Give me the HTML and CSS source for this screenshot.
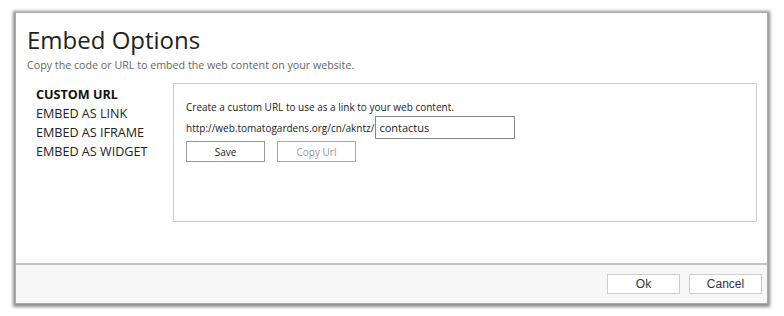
FILE: index.html
```html
<!DOCTYPE html>
<html>
<head>
  <meta charset="UTF-8">
  <title>Embed Options</title>
  <link rel="stylesheet" href="styles.css">
</head>
<body>
  <div class="dialog">
    <div class="dialog-body">
      <h1>Embed Options</h1>
      <p class="subtitle">Copy the code or URL to embed the web content on your website.</p>

      <div class="main">
        <ul class="nav">
          <li class="active">CUSTOM URL</li>
          <li>EMBED AS LINK</li>
          <li>EMBED AS IFRAME</li>
          <li>EMBED AS WIDGET</li>
        </ul>

        <div class="panel">
          <p class="hint">Create a custom URL to use as a link to your web content.</p>
          <div class="url-row">
            <span class="url-base">http://web.tomatogardens.org/cn/akntz/</span>
            <input type="text" class="url-input" value="contactus">
          </div>
          <div class="panel-buttons">
            <button class="btn">Save</button>
            <button class="btn" disabled>Copy Url</button>
          </div>
        </div>
      </div>
    </div>

    <div class="dialog-footer">
      <button class="footer-btn">Ok</button>
      <button class="footer-btn">Cancel</button>
    </div>
  </div>
</body>
</html>
```

FILE: styles.css
```css
body {
  margin: 0;
  padding: 13px 17px 13px 16px;
  background: white;
  font-family: "Open Sans", "Noto Sans", sans-serif;
  color: #222;
}
.dialog {
  width: 751px;
  height: 290px;
  background: white;
  display: flex;
  flex-direction: column;
  box-shadow: 0 0 0 1px #aaa, 0 1px 3px 3px rgba(0,0,0,0.45);
}
.dialog-body {
  flex: 1;
  padding: 12px 10px 0 11px;
}
h1 {
  margin: 0;
  font-size: 24px;
  font-weight: normal;
  line-height: 30px;
  color: #222;
}
.subtitle {
  margin: 3px 0 0;
  font-size: 10.7px;
  color: #666;
}
.main {
  display: flex;
  margin-top: 11px;
}
.nav {
  list-style: none;
  margin: 0;
  padding: 2px 0 0 9px;
  width: 137px;
  font-size: 12.6px;
  line-height: 19px;
}
.nav .active {
  font-weight: bold;
  color: #111;
}
.panel {
  flex: 1;
  height: 121px;
  border: 1px solid #ccc;
  padding: 16px 12px 0 12px;
  font-size: 10px;
}
.hint {
  margin: 0 0 2px;
}
.url-row {
  display: flex;
  align-items: center;
  gap: 1px;
}
.url-input {
  width: 140px;
  height: 23px;
  box-sizing: border-box;
  border: 1px solid #888;
  padding: 0 3px;
  font-family: inherit;
  font-size: 11px;
  color: #222;
}
.panel-buttons {
  display: flex;
  gap: 12px;
  margin-top: 2px;
}
.btn {
  width: 79px;
  height: 21px;
  background: white;
  border: 1px solid #999;
  font-family: inherit;
  font-size: 10px;
  color: #222;
  padding: 0;
}
.btn:disabled {
  border-color: #aaa;
  color: #999;
}
.dialog-footer {
  height: 38px;
  border-top: 2px solid #c2c2c2;
  background: #f7f7f7;
  display: flex;
  justify-content: flex-end;
  align-items: center;
  gap: 9px;
  padding-right: 5px;
}
.footer-btn {
  width: 73px;
  height: 20px;
  background: white;
  border: 1px solid #ccc;
  font-family: "Liberation Sans", Arial, sans-serif;
  font-size: 12px;
  color: #333;
  padding: 0;
}
```
